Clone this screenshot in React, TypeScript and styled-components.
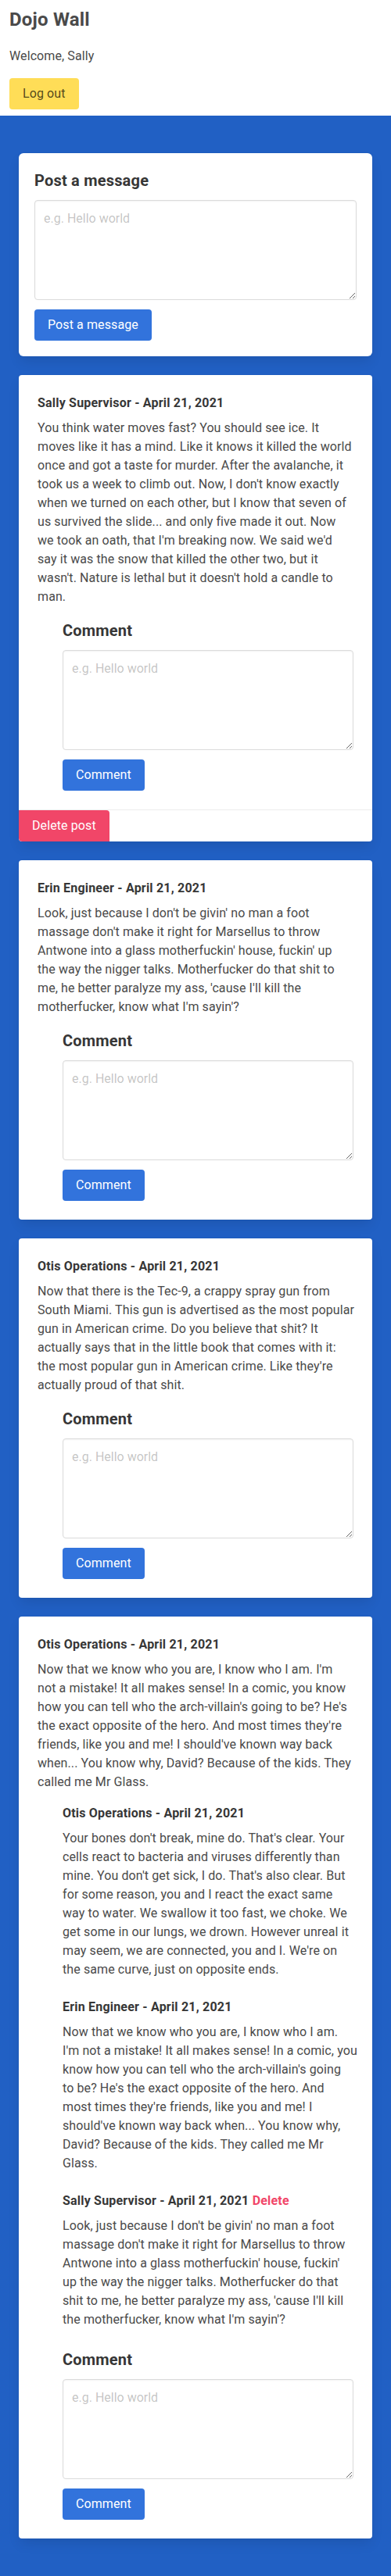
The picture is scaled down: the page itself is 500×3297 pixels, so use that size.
import React from "react";
import styled, { createGlobalStyle } from "styled-components";

const GlobalStyle = createGlobalStyle`
  *, *::before, *::after { box-sizing: border-box; }
  html { background: #fff; }
  body {
    margin: 0;
    font-family: Roboto, "Liberation Sans", sans-serif;
    font-size: 16px;
    line-height: 1.5;
    color: #4a4a4a;
    letter-spacing: 0.1px;
  }
  h1, p { margin: 0; }
`;

const Header = styled.header`
  padding: 12px 12px 8px;
  background: #fff;
`;

const SiteTitle = styled.h1`
  font-size: 24px;
  font-weight: 700;
  line-height: 27px;
  color: #4a4a4a;
  margin: 0 0 21px;
  letter-spacing: 0.2px;
`;

const Welcome = styled.p`
  margin: 0 0 16px;
  line-height: 24px;
`;

const Button = styled.button<{ $tone: "link" | "warning" | "danger" }>`
  display: inline-flex;
  align-items: center;
  justify-content: center;
  height: 40px;
  padding: 0 17px;
  border: none;
  border-radius: 4px;
  font-family: inherit;
  font-size: 16px;
  letter-spacing: 0.1px;
  line-height: 24px;
  cursor: pointer;
  background: ${(p) => (p.$tone === "link" ? "#3273dc" : p.$tone === "warning" ? "#ffdd57" : "#f14668")};
  color: ${(p) => (p.$tone === "warning" ? "rgba(0,0,0,0.7)" : "#fff")};
`;

const FormButton = styled(Button)`
  margin-top: 12px;
`;

const DeleteButton = styled(Button)`
  border-radius: 0 4px 0 4px;
`;

const Wall = styled.section`
  background: #2160c4;
  padding: 48px 24px;
  display: flex;
  flex-direction: column;
  gap: 24px;
`;

const Box = styled.div`
  background: #fff;
  border-radius: 6px;
  padding: 20px;
  box-shadow: 0 0.5em 1em -0.125em rgba(10, 10, 10, 0.1), 0 0 0 1px rgba(10, 10, 10, 0.02);
`;

const Label = styled.label`
  display: block;
  font-size: 20px;
  font-weight: 700;
  line-height: 30px;
  color: #363636;
  margin-bottom: 10px;
  letter-spacing: 0.2px;
`;

const TextArea = styled.textarea`
  display: block;
  width: 100%;
  height: 128px;
  padding: 11px;
  border: 1px solid #dbdbdb;
  border-radius: 4px;
  font-family: inherit;
  font-size: 16px;
  line-height: 24px;
  color: #363636;
  background: #fff;
  box-shadow: inset 0 0.0625em 0.125em rgba(10, 10, 10, 0.05);
  resize: vertical;
  &::placeholder { color: rgba(54, 54, 54, 0.3); }
`;

const Card = styled.article`
  background: #fff;
  border-radius: 4px;
  overflow: hidden;
  box-shadow: 0 0.5em 1em -0.125em rgba(10, 10, 10, 0.1), 0 0 0 1px rgba(10, 10, 10, 0.02);
`;

const CardContent = styled.div`
  padding: 24px;
`;

const CardFooter = styled.footer`
  display: flex;
  border-top: 1px solid #ededed;
`;

const Author = styled.p`
  font-weight: 700;
  color: #363636;
  line-height: 24px;
  margin: 0 0 8px;
  letter-spacing: 0.2px;
`;

const DeleteLink = styled.a`
  color: #f14668;
  cursor: pointer;
`;

const Body = styled.p`
  margin: 0;
  line-height: 24px;
  white-space: pre;
`;

const Indented = styled.div`
  margin: 16px 0 0 32px;
`;

const CommentItem = styled.div`
  margin-bottom: 24px;
`;

type Comment = { author: string; lines: string[]; own?: boolean };
type Post = { author: string; lines: string[]; own?: boolean; comments?: Comment[] };

const JULES = [
  "Look, just because I don't be givin' no man a foot",
  "massage don't make it right for Marsellus to throw",
  "Antwone into a glass motherfuckin' house, fuckin' up",
  "the way the nigger talks. Motherfucker do that shit to",
  "me, he better paralyze my ass, 'cause I'll kill the",
  "motherfucker, know what I'm sayin'?",
];

const posts: Post[] = [
  {
    author: "Sally Supervisor - April 21, 2021",
    own: true,
    lines: [
      "You think water moves fast? You should see ice. It",
      "moves like it has a mind. Like it knows it killed the world",
      "once and got a taste for murder. After the avalanche, it",
      "took us a week to climb out. Now, I don't know exactly",
      "when we turned on each other, but I know that seven of",
      "us survived the slide... and only five made it out. Now",
      "we took an oath, that I'm breaking now. We said we'd",
      "say it was the snow that killed the other two, but it",
      "wasn't. Nature is lethal but it doesn't hold a candle to",
      "man.",
    ],
  },
  { author: "Erin Engineer - April 21, 2021", lines: JULES },
  {
    author: "Otis Operations - April 21, 2021",
    lines: [
      "Now that there is the Tec-9, a crappy spray gun from",
      "South Miami. This gun is advertised as the most popular",
      "gun in American crime. Do you believe that shit? It",
      "actually says that in the little book that comes with it:",
      "the most popular gun in American crime. Like they're",
      "actually proud of that shit.",
    ],
  },
  {
    author: "Otis Operations - April 21, 2021",
    lines: [
      "Now that we know who you are, I know who I am. I'm",
      "not a mistake! It all makes sense! In a comic, you know",
      "how you can tell who the arch-villain's going to be? He's",
      "the exact opposite of the hero. And most times they're",
      "friends, like you and me! I should've known way back",
      "when... You know why, David? Because of the kids. They",
      "called me Mr Glass.",
    ],
    comments: [
      {
        author: "Otis Operations - April 21, 2021",
        lines: [
          "Your bones don't break, mine do. That's clear. Your",
          "cells react to bacteria and viruses differently than",
          "mine. You don't get sick, I do. That's also clear. But",
          "for some reason, you and I react the exact same",
          "way to water. We swallow it too fast, we choke. We",
          "get some in our lungs, we drown. However unreal it",
          "may seem, we are connected, you and I. We're on",
          "the same curve, just on opposite ends.",
        ],
      },
      {
        author: "Erin Engineer - April 21, 2021",
        lines: [
          "Now that we know who you are, I know who I am.",
          "I'm not a mistake! It all makes sense! In a comic, you",
          "know how you can tell who the arch-villain's going",
          "to be? He's the exact opposite of the hero. And",
          "most times they're friends, like you and me! I",
          "should've known way back when... You know why,",
          "David? Because of the kids. They called me Mr",
          "Glass.",
        ],
      },
      {
        author: "Sally Supervisor - April 21, 2021",
        own: true,
        lines: [
          "Look, just because I don't be givin' no man a foot",
          "massage don't make it right for Marsellus to throw",
          "Antwone into a glass motherfuckin' house, fuckin'",
          "up the way the nigger talks. Motherfucker do that",
          "shit to me, he better paralyze my ass, 'cause I'll kill",
          "the motherfucker, know what I'm sayin'?",
        ],
      },
    ],
  },
];

function PostCard({ post }: { post: Post }) {
  return (
    <Card>
      <CardContent>
        <Author>{post.author}</Author>
        <Body>{post.lines.join("\n")}</Body>
        {post.comments && (
          <Indented>
            {post.comments.map((c, i) => (
              <CommentItem key={i}>
                <Author>
                  {c.author}
                  {c.own && (
                    <>
                      {" "}
                      <DeleteLink>Delete</DeleteLink>
                    </>
                  )}
                </Author>
                <Body>{c.lines.join("\n")}</Body>
              </CommentItem>
            ))}
          </Indented>
        )}
        <Indented as="form">
          <Label>Comment</Label>
          <TextArea placeholder="e.g. Hello world" />
          <FormButton $tone="link" type="button">Comment</FormButton>
        </Indented>
      </CardContent>
      {post.own && (
        <CardFooter>
          <DeleteButton $tone="danger" type="button">Delete post</DeleteButton>
        </CardFooter>
      )}
    </Card>
  );
}

export default function App() {
  return (
    <>
      <GlobalStyle />
      <Header>
        <SiteTitle>Dojo Wall</SiteTitle>
        <Welcome>Welcome, Sally</Welcome>
        <Button $tone="warning" type="button">Log out</Button>
      </Header>
      <Wall>
        <Box as="form">
          <Label>Post a message</Label>
          <TextArea placeholder="e.g. Hello world" />
          <FormButton $tone="link" type="button">Post a message</FormButton>
        </Box>
        {posts.map((p, i) => (
          <PostCard key={i} post={p} />
        ))}
      </Wall>
    </>
  );
}
